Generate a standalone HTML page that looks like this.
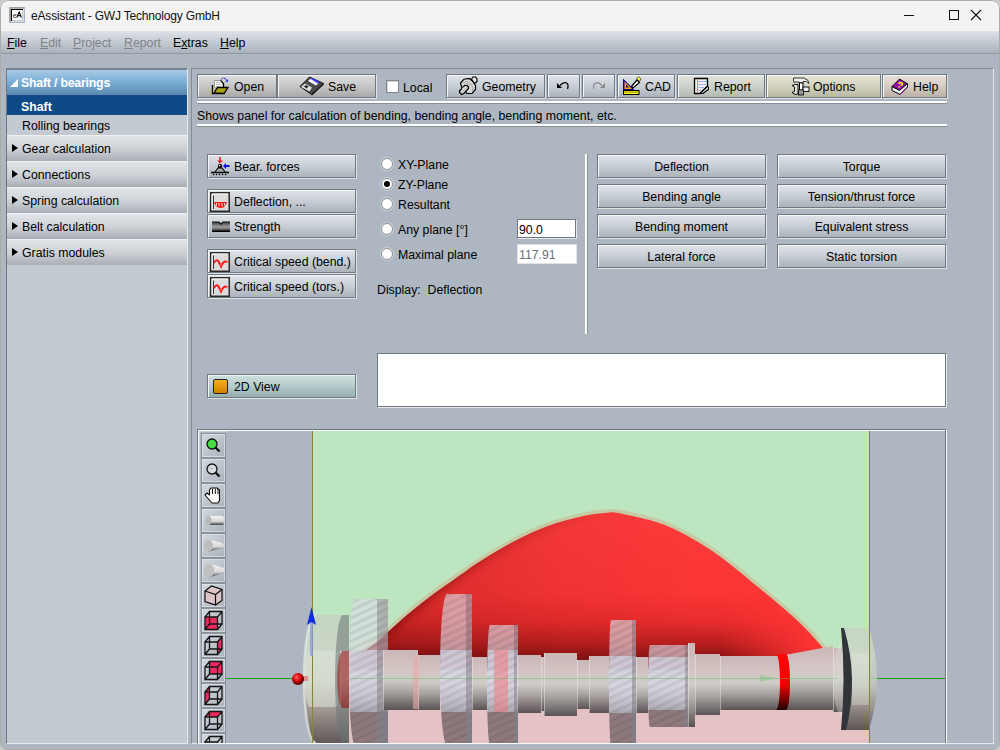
<!DOCTYPE html>
<html><head><meta charset="utf-8">
<style>
*{margin:0;padding:0;box-sizing:border-box}
html,body{width:1000px;height:750px;overflow:hidden;background:#c9c9c9}
body{font-family:"Liberation Sans",sans-serif;font-size:12.3px;color:#000;position:relative}
.a{position:absolute}
#win{position:absolute;left:0;top:0;width:1000px;height:750px;background:#aeb7c1;border-radius:8px;overflow:hidden}
#frame{position:absolute;left:0;top:0;width:1000px;height:750px;border-radius:8px;border:1px solid #ababab;z-index:50}
#title{position:absolute;left:0;top:0;width:1000px;height:31px;background:#f3f3f3}
#menu{position:absolute;left:0;top:31px;width:1000px;height:23px;background:linear-gradient(#dde2e7,#c4cad1 50%,#aab2bb);border-bottom:1px solid #8f979f}
.mi{position:absolute;top:36px;font-size:12.3px;line-height:14px}
.mi u{text-decoration:underline;text-underline-offset:0.8px;text-decoration-thickness:1px}
.dis{color:#7d8388}
.btn{position:absolute;border:1px solid #707880;box-shadow:inset 1px 1px 0 #f4f6f8,1px 1px 0 #dfe3e7;background:linear-gradient(#e0e4e9,#c8ced5 50%,#abb2ba);font-size:12.3px;line-height:22px;white-space:nowrap}
.grey{background:linear-gradient(#dedede,#c6c6c6 50%,#a9a9a9)}
.green{background:linear-gradient(#e0e4dd,#ccd2ca 50%,#b3bab2)}
.khaki{background:linear-gradient(#e6e5d7,#d3d2bf 50%,#b9b8a2)}
.pink{background:linear-gradient(#e9e2db,#d6ccc2 50%,#bcb1a6)}
.teal{background:linear-gradient(#cfe0e0,#b5cbcb 50%,#95adad)}
.sep{position:absolute;height:3px;background:linear-gradient(#fdfdfd 0,#fdfdfd 66%,#878e96 66%)}
.cat{position:absolute;left:7px;width:180px;height:26px;background:linear-gradient(#e1e4e8,#cfd3d8 50%,#a9aeb5);border-top:1px solid #eef0f2;font-size:12.3px;line-height:24px;padding-top:1px}
.tri{position:absolute;left:5px;top:8px;width:0;height:0;border-left:6px solid #000;border-top:4.5px solid transparent;border-bottom:4.5px solid transparent}
.rad{position:absolute;width:12px;height:12px;border-radius:50%;background:#fff;border:1px solid #8a9096;box-shadow:0 0 0 1px #c9cfd5}
.lbl{position:absolute;font-size:12.3px;line-height:14px;white-space:nowrap;margin-top:1px}
.tb{position:absolute;left:201px;width:25px;height:24px;border:1px solid #8d949c;box-shadow:inset 1px 1px 0 #e8ecf0, 1px 1px 0 #d4d9de;background:linear-gradient(135deg,#c9cfd6,#aab2bb)}
</style></head><body>
<div id="win">
 <div id="title">
  <svg class="a" style="left:9px;top:7px" width="17" height="17" viewBox="0 0 17 17"><rect x="0.5" y="0.5" width="15" height="15" fill="#ddd" stroke="#aab6c3"/><path d="M1 15V1H15" fill="none" stroke="#8a8a8a"/><path d="M2.5 14V2.5H14" fill="none" stroke="#000" stroke-width="1.2"/><rect x="3" y="3" width="10.5" height="10.5" fill="#fff"/><path d="M13.5 3V13.5H3" fill="none" stroke="#c8c8c8"/><text x="3.7" y="10.6" font-family="Liberation Sans" font-size="7" fill="#222">e</text><path d="M7.8 10.5L10.2 5L12.4 10.5M8.7 8.8H11.5" fill="none" stroke="#000" stroke-width="1.1"/></svg>
  <div class="a" style="left:31px;top:8px;font-size:12px;letter-spacing:-0.18px;line-height:16px;color:#111">eAssistant - GWJ Technology GmbH</div>
  <div class="a" style="left:904px;top:15px;width:10px;height:1px;background:#111"></div>
  <div class="a" style="left:949px;top:10px;width:10px;height:10px;border:1px solid #111"></div>
  <svg class="a" style="left:970px;top:9px" width="12" height="12"><path d="M1 1L11 11M11 1L1 11" stroke="#111" stroke-width="1.1"/></svg>
 </div>
 <div id="menu"></div>
 <div class="mi" style="left:7px"><u>F</u>ile</div>
 <div class="mi dis" style="left:40px"><u>E</u>dit</div>
 <div class="mi dis" style="left:73px"><u>P</u>roject</div>
 <div class="mi dis" style="left:124px"><u>R</u>eport</div>
 <div class="mi" style="left:173px">E<u>x</u>tras</div>
 <div class="mi" style="left:220px"><u>H</u>elp</div>

 <!-- left panel -->
 <div class="a" style="left:6px;top:68px;width:182px;height:676px;background:#c4cad1;border-left:1px solid #6e767e;border-top:1px solid #7a8288;border-right:1px solid #e6e9ec;border-bottom:1px solid #e6e9ec"></div>
 <div class="a" style="left:7px;top:69px;width:180px;height:26px;border-top:1px solid #6b8794;background:linear-gradient(#a8cbe5,#7aadd5 50%,#5b89ae)"></div>
 <svg class="a" style="left:10px;top:79px" width="8" height="8"><path d="M8 0V8H0Z" fill="#fff"/></svg>
 <div class="lbl" style="left:21px;top:75px;color:#fff;font-weight:bold;letter-spacing:-0.2px">Shaft / bearings</div>
 <div class="a" style="left:7px;top:95px;width:180px;height:20px;background:#0f4a87"></div>
 <div class="lbl" style="left:21px;top:99px;color:#fff;font-weight:bold">Shaft</div>
 <div class="lbl" style="left:22px;top:118px">Rolling bearings</div>
 <div class="cat" style="top:135px"><div class="tri"></div><span style="position:absolute;left:15px">Gear calculation</span></div>
 <div class="cat" style="top:161px"><div class="tri"></div><span style="position:absolute;left:15px">Connections</span></div>
 <div class="cat" style="top:187px"><div class="tri"></div><span style="position:absolute;left:15px">Spring calculation</span></div>
 <div class="cat" style="top:213px"><div class="tri"></div><span style="position:absolute;left:15px">Belt calculation</span></div>
 <div class="cat" style="top:239px"><div class="tri"></div><span style="position:absolute;left:15px">Gratis modules</span></div>

 <!-- main panel border -->
 <div class="a" style="left:191px;top:68px;width:803px;height:676px;border-left:1px solid #838b93;border-top:1px solid #838b93;border-right:1px solid #e4e8ec;border-bottom:1px solid #e4e8ec"></div>

 <!-- MAIN -->

 <!-- toolbar -->
 <div class="btn grey" style="left:197px;top:74px;width:80px;height:24px"><span class="a" style="left:36px;top:1px">Open</span>
  <svg class="a" style="left:10px;top:-1px" width="24" height="24" viewBox="0 0 24 24"><path d="M6.5 6.5h6l2.5 2.5v5H6.5z" fill="#fff" stroke="#999" stroke-width="1"/><path d="M12.5 6.5l3 3v4" fill="none" stroke="#000" stroke-width="1.3"/><path d="M8 8.5h4M8 10.5h5M8 12.5h5" stroke="#aaa" stroke-width="0.8"/><path d="M4.5 11v8.5h12" fill="none" stroke="#000" stroke-width="1.4"/><path d="M5.5 11.5v7" stroke="#c8c030" stroke-width="1"/><path d="M6 19l3.5-5.5h10.5l-3.8 5.8z" fill="#a8a418" stroke="#000" stroke-width="1.3"/><path d="M13 5.5c1.5-2 4-2 5 0.5" fill="none" stroke="#2030d0" stroke-width="1.1" stroke-dasharray="1.2 0.6"/><path d="M17 7.5l3-2.5v3z" fill="#2030e0"/></svg>
 </div>
 <div class="btn grey" style="left:277px;top:74px;width:99px;height:24px"><span class="a" style="left:50px;top:1px">Save</span>
  <svg class="a" style="left:18px;top:-1px" width="32" height="24" viewBox="0 0 32 24"><path d="M4 12.5L13.5 3L27.5 9.5L15.5 20.5Z" fill="#4a4a4a" stroke="#111" stroke-width="1"/><path d="M27.5 9.5L15.5 20.5L16 21.5L28 10.5Z" fill="#111"/><path d="M12 7L15 4.5L23 8.5L20 11.5Z" fill="#fff"/><path d="M14.5 5L16 4L23.5 8L22 9.5Z" fill="#3a40f0"/><path d="M5 13L9 9.5L16 13.5L13.5 17.5Z" fill="#ddd"/><path d="M8 12.5L10 11L12.5 12.5L10.5 14.5Z" fill="#222"/></svg>
 </div>
 <div class="a" style="left:386px;top:80px;width:13px;height:13px;background:#fff;border:1px solid #7c848c;box-shadow:inset 1px 1px 0 #d0d4d8"></div>
 <div class="lbl" style="left:403px;top:80px">Local</div>
 <div class="btn" style="left:446px;top:74px;width:99px;height:24px"><span class="a" style="left:35px;top:1px">Geometry</span>
  
 </div>
 <div class="btn" style="left:547px;top:74px;width:33px;height:24px">
  
 </div>
 <div class="btn" style="left:582px;top:74px;width:33px;height:24px">
  
 </div>
 <div class="btn" style="left:617px;top:74px;width:58px;height:24px"><span class="a" style="left:27px;top:1px">CAD</span>
  
 </div>
 <div class="btn green" style="left:677px;top:74px;width:88px;height:24px"><span class="a" style="left:36px;top:1px">Report</span>
  
 </div>
 <div class="btn khaki" style="left:766px;top:74px;width:115px;height:24px"><span class="a" style="left:46px;top:1px">Options</span>
  
 </div>
 <div class="btn pink" style="left:882px;top:74px;width:65px;height:24px"><span class="a" style="left:30px;top:1px">Help</span>
  
 </div>

 <svg class="a" style="left:456px;top:74px" width="24" height="24" viewBox="0 0 24 24">
  <path d="M4.5 9L8 5.2L13 4.5L16.5 7L19.5 11.5V15.5L16 19.5H11L6 14Z" fill="#d8d8d8" stroke="#000" stroke-width="1.2"/>
  <path d="M7 8.5Q11 6 14.5 9.5M8 10.5Q11.5 8.5 14 11.5M15 10Q17.5 13 16.5 17" fill="none" stroke="#999" stroke-width="0.8"/>
  <path d="M15.5 5L17 3H19.5L21 5V7.5L18.5 9.5Z" fill="#e8e8e8" stroke="#000" stroke-width="1.2"/>
  <path d="M3.5 17L8.5 11.5H11L12.5 13V14.5L8 19.5L5.5 20.5L3.5 18.5Z" fill="#c8c8c8" stroke="#000" stroke-width="1.2"/>
  <path d="M6 14.5L10 13" stroke="#f4f4f4" stroke-width="1"/>
 </svg>
 <svg class="a" style="left:547px;top:74px" width="33" height="24" viewBox="0 0 33 24">
  <path d="M10 9V14H15Z" fill="#000"/>
  <path d="M13 11.5Q16.5 7.5 19.5 9Q22 10.5 20.5 15" fill="none" stroke="#000" stroke-width="1.3"/>
 </svg>
 <svg class="a" style="left:582px;top:74px" width="33" height="24" viewBox="0 0 33 24">
  <path d="M23 9V14H18Z" fill="#8a8a8a"/>
  <path d="M20 11.5Q16.5 7.5 13.5 9Q11 10.5 12 15" fill="none" stroke="#8a8a8a" stroke-width="1.2"/>
 </svg>
 <svg class="a" style="left:620px;top:74px" width="24" height="24" viewBox="0 0 24 24">
  <path d="M3 4.5V16.5H15Z" fill="#0a0a8a"/>
  <path d="M4.5 7.5V15H12Z" fill="#ffa010"/>
  <path d="M6 10.5V13.5H9Z" fill="#0a0a8a"/>
  <rect x="3.5" y="16.5" width="15.5" height="4" fill="#ffff20" stroke="#000" stroke-width="1"/>
  <path d="M5 17.5v1.2M7 17.5v1.2M9 17.5v1.2M11 17.5v1.2M13 17.5v1.2M15 17.5v1.2M17 17.5v1.2" stroke="#000" stroke-width="0.8"/>
  <path d="M11.5 12.5L17 6L19.5 8.5L13 14Z" fill="#fff" stroke="#000" stroke-width="1.2"/>
  <path d="M16.5 4.5L18.5 2.8L21 5L19.5 7.5Z" fill="#ffff30" stroke="#000" stroke-width="0.6"/>
 </svg>
 <svg class="a" style="left:690px;top:74px" width="24" height="24" viewBox="0 0 24 24">
  <path d="M4.5 4.5H17.5V12L10 19.5H4.5Z" fill="#f4eeee" stroke="#000" stroke-width="1.3"/>
  <path d="M8 7.5H17M8 10.5H17M8 13.5H14M8 16.5H11" stroke="#88c4ee" stroke-width="1"/>
  <path d="M7.5 5V19" stroke="#f08080" stroke-width="1"/>
  <path d="M10 19.5L17.5 12L18.5 13.5V15.5L13 19.5Z" fill="#c8c8c8" stroke="#000" stroke-width="1.1"/>
 </svg>
 <svg class="a" style="left:788px;top:74px" width="24" height="24" viewBox="0 0 24 24">
  <path d="M5.5 4H16L20 6.5L21 9.5L18.5 7.5H15V9H11V8H7L6 8.5L5.5 7Z" fill="#eee" stroke="#222" stroke-width="0.9"/>
  <rect x="11.5" y="9" width="3.5" height="7" fill="#fff" stroke="#000" stroke-width="1"/>
  <path d="M4 11.5L7 10.5H10V20L7 20.5L4 18.5L6.5 17.5V13Z" fill="#ddd" stroke="#000" stroke-width="0.9"/>
  <rect x="15" y="13" width="6" height="4.5" fill="#e8e8e8" stroke="#000" stroke-width="0.9"/>
  <rect x="10.5" y="16" width="5" height="5" fill="#666" stroke="#000" stroke-width="0.8"/>
  <path d="M11 17h4M11 19h4M12 16.5v4M14 16.5v4" stroke="#ccc" stroke-width="0.6"/>
 </svg>
 <svg class="a" style="left:888px;top:74px" width="24" height="24" viewBox="0 0 24 24">
  <path d="M4 12.5L11.5 5L19 9.5L11.5 16.5Z" fill="#9010b0" stroke="#000" stroke-width="0.9"/>
  <path d="M4 12.5V16.5L12 20.5L19.5 13V9.5L11.5 16.5Z" fill="#eee" stroke="#000" stroke-width="1"/>
  <path d="M12 20.5L19.5 13" stroke="#9010b0" stroke-width="1"/>
  <path d="M10.5 9.5Q12 8 14 9Q15.5 10.5 12.5 11.5" fill="none" stroke="#ffee00" stroke-width="1.6"/>
  <rect x="10.3" y="12.2" width="1.6" height="1.4" fill="#ffee00"/>
 </svg>
 <div class="sep" style="left:197px;top:101px;width:750px"></div>
 <div class="lbl" style="left:197px;top:108px">Shows panel for calculation of bending, bending angle, bending moment, etc.</div>
 <div class="sep" style="left:197px;top:124px;width:750px"></div>

 <!-- left buttons -->
 <div class="btn" style="left:207px;top:154px;width:149px;height:24px"><span class="a" style="left:26px;top:1px">Bear. forces</span>
  <svg class="a" style="left:-1px;top:-1px" width="24" height="24" viewBox="0 0 24 24"><path d="M13 3v4" stroke="#e02020" stroke-width="1.6"/><path d="M10 6.5h6l-3 3z" fill="#e02020"/><path d="M18 12h4.5" stroke="#1010d0" stroke-width="1.8"/><path d="M19 9l-3 3 3 3z" fill="#1010d0"/><path d="M7.5 18.5L11 14H15L18.5 18.5Z" fill="#aaa" stroke="#000" stroke-width="1.1"/><circle cx="13" cy="12" r="2.2" fill="#000"/><circle cx="12.6" cy="11.6" r="0.8" fill="#fff"/><path d="M4 18.5H22" stroke="#000" stroke-width="1.3"/><path d="M6.5 20.5h0.1M9.5 20.5h0.1M12.5 20.5h0.1M15.5 20.5h0.1M18.5 20.5h0.1" stroke="#000" stroke-width="1.4" stroke-linecap="round"/></svg>
 </div>
 <div class="btn" style="left:207px;top:189px;width:149px;height:24px"><span class="a" style="left:26px;top:1px">Deflection, ...</span>
  <svg class="a" style="left:1px;top:1px" width="22" height="22" viewBox="0 0 22 22"><rect x="1.75" y="1.75" width="18.5" height="18.5" fill="#dcdcdc" stroke="#2a2a2a" stroke-width="1.5"/><path d="M3 19V3H19" fill="none" stroke="#f8f8f8" stroke-width="1"/><path d="M4.5 4.5V18" stroke="#333" stroke-width="1"/><path d="M5 11H18L17 13.5Q15 17 11.5 17Q8 17 6 13.5Z" fill="#ff1010"/><path d="M7.5 12v2.5M10 12v3.5M13 12v3.5M15.5 12v2.5" stroke="#fff" stroke-width="0.9"/></svg>
 </div>
 <div class="btn" style="left:207px;top:214px;width:149px;height:24px"><span class="a" style="left:26px;top:1px">Strength</span>
  <svg class="a" style="left:3px;top:6px" width="20" height="12" viewBox="0 0 20 12"><defs><linearGradient id="stg" x1="0" y1="0" x2="0" y2="1"><stop offset="0" stop-color="#3a3a3a"/><stop offset="0.55" stop-color="#a0a0a0"/><stop offset="1" stop-color="#3a3a3a"/></linearGradient></defs><path d="M1 1H8L10 3.2L12 1H19V10H1Z" fill="url(#stg)"/><path d="M1 1H8L10 3.2L12 1H19" fill="none" stroke="#111" stroke-width="1.2"/><path d="M1 10.3H19" stroke="#000" stroke-width="1.4"/></svg>
 </div>
 <div class="btn" style="left:207px;top:249px;width:149px;height:24px"><span class="a" style="left:26px;top:1px">Critical speed (bend.)</span>
  <svg class="a" style="left:1px;top:1px" width="22" height="22" viewBox="0 0 22 22"><rect x="1.75" y="1.75" width="18.5" height="18.5" fill="#dcdcdc" stroke="#2a2a2a" stroke-width="1.5"/><path d="M3 19V3H19" fill="none" stroke="#f8f8f8" stroke-width="1"/><path d="M4.5 4.5V18" stroke="#333" stroke-width="1"/><path d="M5 12Q7.5 7.5 9.5 10.5Q11 13 12 15.5Q13.5 12 15 11Q17 10 18.5 11.5" fill="none" stroke="#ff1010" stroke-width="2"/><circle cx="7" cy="11" r="0.6" fill="#fff"/><circle cx="18" cy="11" r="0.6" fill="#fff"/><path d="M12 13v1.5" stroke="#fff" stroke-width="0.7"/></svg>
 </div>
 <div class="btn" style="left:207px;top:274px;width:149px;height:24px"><span class="a" style="left:26px;top:1px">Critical speed (tors.)</span>
  <svg class="a" style="left:1px;top:1px" width="22" height="22" viewBox="0 0 22 22"><rect x="1.75" y="1.75" width="18.5" height="18.5" fill="#dcdcdc" stroke="#2a2a2a" stroke-width="1.5"/><path d="M3 19V3H19" fill="none" stroke="#f8f8f8" stroke-width="1"/><path d="M4.5 4.5V18" stroke="#333" stroke-width="1"/><path d="M5 12Q7.5 7.5 9.5 10.5Q11 13 12 15.5Q13.5 12 15 11Q17 10 18.5 11.5" fill="none" stroke="#ff1010" stroke-width="2"/><circle cx="7" cy="11" r="0.6" fill="#fff"/><circle cx="18" cy="11" r="0.6" fill="#fff"/><path d="M12 13v1.5" stroke="#fff" stroke-width="0.7"/></svg>
 </div>
 <div class="btn teal" style="left:207px;top:374px;width:149px;height:24px"><span class="a" style="left:26px;top:1px">2D View</span>
  <div class="a" style="left:5px;top:4px;width:15px;height:15px;border:1px solid #222;border-radius:2px;background:linear-gradient(#f5b020,#d08000)"></div>
 </div>

 <!-- radios -->
 <div class="rad" style="left:381px;top:158px"></div><div class="lbl" style="left:398px;top:157px">XY-Plane</div>
 <div class="rad" style="left:381px;top:178px"><div class="a" style="left:2px;top:2px;width:6px;height:6px;border-radius:50%;background:#000"></div></div><div class="lbl" style="left:398px;top:177px">ZY-Plane</div>
 <div class="rad" style="left:381px;top:198px"></div><div class="lbl" style="left:398px;top:197px">Resultant</div>
 <div class="rad" style="left:381px;top:223px"></div><div class="lbl" style="left:398px;top:222px">Any plane [°]</div>
 <div class="rad" style="left:381px;top:248px"></div><div class="lbl" style="left:398px;top:247px">Maximal plane</div>
 <div class="a" style="left:517px;top:219px;width:59px;height:19px;background:#fff;border:1px solid #6f777f;box-shadow:1px 1px 0 #e4e8ec"><span class="a" style="left:1px;top:3px;line-height:14px">90.0</span></div>
 <div class="a" style="left:517px;top:244px;width:60px;height:20px;background:#fff;border:1px solid #dfe3e7"><span class="a" style="left:1px;top:3px;line-height:14px;color:#6c7074">117.91</span></div>
 <div class="lbl" style="left:377px;top:282px;">Display:&nbsp; Deflection</div>
 <div class="a" style="left:585px;top:154px;width:3px;height:180px;background:linear-gradient(90deg,#fdfdfd 66%,#8a9199 66%)"></div>

 <!-- right buttons -->
 <div class="btn" style="left:597px;top:154px;width:169px;height:24px;text-align:center;padding-top:1px">Deflection</div>
 <div class="btn" style="left:777px;top:154px;width:169px;height:24px;text-align:center;padding-top:1px">Torque</div>
 <div class="btn" style="left:597px;top:184px;width:169px;height:24px;text-align:center;padding-top:1px">Bending angle</div>
 <div class="btn" style="left:777px;top:184px;width:169px;height:24px;text-align:center;padding-top:1px">Tension/thrust force</div>
 <div class="btn" style="left:597px;top:214px;width:169px;height:24px;text-align:center;padding-top:1px">Bending moment</div>
 <div class="btn" style="left:777px;top:214px;width:169px;height:24px;text-align:center;padding-top:1px">Equivalent stress</div>
 <div class="btn" style="left:597px;top:244px;width:169px;height:24px;text-align:center;padding-top:1px">Lateral force</div>
 <div class="btn" style="left:777px;top:244px;width:169px;height:24px;text-align:center;padding-top:1px">Static torsion</div>

 <!-- text area -->
 <div class="a" style="left:377px;top:353px;width:569px;height:54px;background:#fff;border:1px solid #6f777f;box-shadow:1px 1px 0 #e4e8ec"></div>

 <!-- 3D view -->
 <!--SCENE-->
<div id="view" class="a" style="left:197px;top:429px;width:750px;height:315px;border-left:1px solid #6f777f;border-top:1px solid #6f777f;border-right:1px solid #fbfcfd;border-bottom:1px solid #fbfcfd;overflow:hidden">
  <svg class="a" style="left:0;top:0" width="748" height="313" viewBox="198 430 748 313">
   <defs>
    <linearGradient id="redG" x1="0" y1="511" x2="0" y2="662" gradientUnits="userSpaceOnUse">
     <stop offset="0" stop-color="#ff3b3b"/><stop offset="0.55" stop-color="#fa3535"/><stop offset="0.73" stop-color="#e82c2c"/><stop offset="0.88" stop-color="#b81e1e"/><stop offset="1" stop-color="#781010"/>
    </linearGradient>
    <linearGradient id="redL" x1="350" y1="0" x2="700" y2="0" gradientUnits="userSpaceOnUse">
     <stop offset="0" stop-color="#400000" stop-opacity="0.22"/><stop offset="0.6" stop-color="#400000" stop-opacity="0.06"/><stop offset="1" stop-color="#400000" stop-opacity="0"/>
    </linearGradient>
    <linearGradient id="redR" x1="720" y1="0" x2="810" y2="0" gradientUnits="userSpaceOnUse"><stop offset="0" stop-color="#ff3434" stop-opacity="0"/><stop offset="1" stop-color="#ff3434" stop-opacity="0.95"/></linearGradient>
    <linearGradient id="shaftG" x1="0" y1="0" x2="0" y2="1">
     <stop offset="0" stop-color="#cab6b6"/><stop offset="0.3" stop-color="#d3c5c3"/><stop offset="0.5" stop-color="#cdccc7"/><stop offset="0.7" stop-color="#a8a2a0"/><stop offset="1" stop-color="#5a5254"/>
    </linearGradient>
    <linearGradient id="shade" x1="0" y1="0" x2="0" y2="1">
     <stop offset="0" stop-color="#fff" stop-opacity="0"/><stop offset="0.5" stop-color="#fff" stop-opacity="0.2"/><stop offset="1" stop-color="#222" stop-opacity="0.5"/>
    </linearGradient>
    <pattern id="stripe" width="7" height="7" patternUnits="userSpaceOnUse" patternTransform="rotate(-25)">
     <rect width="7" height="3" fill="#333"/>
    </pattern>
    <linearGradient id="brgG" x1="0" y1="0" x2="0" y2="1">
     <stop offset="0" stop-color="#c6d6c4"/><stop offset="0.3" stop-color="#ccd8c8"/><stop offset="0.55" stop-color="#c4c8c0"/><stop offset="0.72" stop-color="#a09a94"/><stop offset="1" stop-color="#5e5456"/>
    </linearGradient>
    <radialGradient id="ball" cx="0.4" cy="0.35" r="0.6"><stop offset="0" stop-color="#ff6060"/><stop offset="0.6" stop-color="#d00000"/><stop offset="1" stop-color="#500000"/></radialGradient>
    <linearGradient id="ringG" x1="0" y1="0" x2="0" y2="1"><stop offset="0" stop-color="#ff0808"/><stop offset="0.55" stop-color="#f00000"/><stop offset="1" stop-color="#200000"/></linearGradient>
    <linearGradient id="tbg" x1="0" y1="0" x2="1" y2="1"><stop offset="0" stop-color="#d3d9df"/><stop offset="1" stop-color="#a9b1ba"/></linearGradient>
    <linearGradient id="cylg" x1="0" y1="0" x2="0" y2="1"><stop offset="0" stop-color="#f4f4f4"/><stop offset="0.6" stop-color="#d8d8d8"/><stop offset="1" stop-color="#404040"/></linearGradient>
   </defs>
   <rect x="198" y="430" width="748" height="313" fill="#aeb7c1"/>
   <rect x="312" y="431" width="557" height="248" fill="#bde5bf"/>
   <rect x="312" y="679" width="557" height="64" fill="#e5c3c5"/>
   <path d="M350.0 660.0 C354.3 656.7 369.5 645.2 376.0 640.0 C382.5 634.8 383.8 633.1 389.0 628.5 C394.2 623.9 399.7 618.6 407.0 612.5 C414.3 606.4 424.2 598.6 433.0 592.0 C441.8 585.4 452.8 578.1 460.0 573.0 C467.2 567.9 467.3 567.1 476.0 561.6 C484.7 556.1 500.0 546.6 512.0 540.3 C524.0 534.0 536.0 528.4 548.0 524.0 C560.0 519.6 574.5 516.2 584.0 514.0 C593.5 511.8 599.0 511.4 605.0 511.0 C611.0 510.6 610.0 509.5 620.0 511.5 C630.0 513.5 649.8 516.9 665.0 523.0 C680.2 529.1 695.8 538.0 711.0 548.0 C726.2 558.0 741.0 570.8 756.0 583.0 C771.0 595.2 789.7 610.9 801.0 621.5 C812.3 632.1 818.5 640.4 824.0 646.5 C829.5 652.6 831.7 655.1 834.0 658.0 C836.3 660.9 837.3 663.0 838.0 664.0 L838 670 L350 670 Z" fill="url(#redG)"/>
   <path d="M350.0 660.0 C354.3 656.7 369.5 645.2 376.0 640.0 C382.5 634.8 383.8 633.1 389.0 628.5 C394.2 623.9 399.7 618.6 407.0 612.5 C414.3 606.4 424.2 598.6 433.0 592.0 C441.8 585.4 452.8 578.1 460.0 573.0 C467.2 567.9 467.3 567.1 476.0 561.6 C484.7 556.1 500.0 546.6 512.0 540.3 C524.0 534.0 536.0 528.4 548.0 524.0 C560.0 519.6 574.5 516.2 584.0 514.0 C593.5 511.8 599.0 511.4 605.0 511.0 C611.0 510.6 610.0 509.5 620.0 511.5 C630.0 513.5 649.8 516.9 665.0 523.0 C680.2 529.1 695.8 538.0 711.0 548.0 C726.2 558.0 741.0 570.8 756.0 583.0 C771.0 595.2 789.7 610.9 801.0 621.5 C812.3 632.1 818.5 640.4 824.0 646.5 C829.5 652.6 831.7 655.1 834.0 658.0 C836.3 660.9 837.3 663.0 838.0 664.0 L838 670 L350 670 Z" fill="url(#redL)"/>
   <path d="M350.0 660.0 C354.3 656.7 369.5 645.2 376.0 640.0 C382.5 634.8 383.8 633.1 389.0 628.5 C394.2 623.9 399.7 618.6 407.0 612.5 C414.3 606.4 424.2 598.6 433.0 592.0 C441.8 585.4 452.8 578.1 460.0 573.0 C467.2 567.9 467.3 567.1 476.0 561.6 C484.7 556.1 500.0 546.6 512.0 540.3 C524.0 534.0 536.0 528.4 548.0 524.0 C560.0 519.6 574.5 516.2 584.0 514.0 C593.5 511.8 599.0 511.4 605.0 511.0 C611.0 510.6 610.0 509.5 620.0 511.5 C630.0 513.5 649.8 516.9 665.0 523.0 C680.2 529.1 695.8 538.0 711.0 548.0 C726.2 558.0 741.0 570.8 756.0 583.0 C771.0 595.2 789.7 610.9 801.0 621.5 C812.3 632.1 818.5 640.4 824.0 646.5 C829.5 652.6 831.7 655.1 834.0 658.0 C836.3 660.9 837.3 663.0 838.0 664.0 L838 670 L350 670 Z" fill="url(#redR)"/>
   <clipPath id="redclip"><path d="M350.0 660.0 C354.3 656.7 369.5 645.2 376.0 640.0 C382.5 634.8 383.8 633.1 389.0 628.5 C394.2 623.9 399.7 618.6 407.0 612.5 C414.3 606.4 424.2 598.6 433.0 592.0 C441.8 585.4 452.8 578.1 460.0 573.0 C467.2 567.9 467.3 567.1 476.0 561.6 C484.7 556.1 500.0 546.6 512.0 540.3 C524.0 534.0 536.0 528.4 548.0 524.0 C560.0 519.6 574.5 516.2 584.0 514.0 C593.5 511.8 599.0 511.4 605.0 511.0 C611.0 510.6 610.0 509.5 620.0 511.5 C630.0 513.5 649.8 516.9 665.0 523.0 C680.2 529.1 695.8 538.0 711.0 548.0 C726.2 558.0 741.0 570.8 756.0 583.0 C771.0 595.2 789.7 610.9 801.0 621.5 C812.3 632.1 818.5 640.4 824.0 646.5 C829.5 652.6 831.7 655.1 834.0 658.0 C836.3 660.9 837.3 663.0 838.0 664.0 L838 670 L350 670 Z"/></clipPath>
   <filter id="blur4" x="-20%" y="-20%" width="140%" height="140%"><feGaussianBlur stdDeviation="4"/></filter>
   <linearGradient id="edgeFade" x1="380" y1="0" x2="620" y2="0" gradientUnits="userSpaceOnUse"><stop offset="0" stop-color="#600808" stop-opacity="0.55"/><stop offset="1" stop-color="#600808" stop-opacity="0"/></linearGradient>
   <g clip-path="url(#redclip)"><path d="M350.0 660.0 C354.3 656.7 369.5 645.2 376.0 640.0 C382.5 634.8 383.8 633.1 389.0 628.5 C394.2 623.9 399.7 618.6 407.0 612.5 C414.3 606.4 424.2 598.6 433.0 592.0 C441.8 585.4 452.8 578.1 460.0 573.0 C467.2 567.9 467.3 567.1 476.0 561.6 C484.7 556.1 500.0 546.6 512.0 540.3 C524.0 534.0 536.0 528.4 548.0 524.0 C560.0 519.6 574.5 516.2 584.0 514.0 C593.5 511.8 599.0 511.4 605.0 511.0 C611.0 510.6 610.0 509.5 620.0 511.5 C630.0 513.5 649.8 516.9 665.0 523.0 C680.2 529.1 695.8 538.0 711.0 548.0 C726.2 558.0 741.0 570.8 756.0 583.0 C771.0 595.2 789.7 610.9 801.0 621.5 C812.3 632.1 818.5 640.4 824.0 646.5 C829.5 652.6 831.7 655.1 834.0 658.0 C836.3 660.9 837.3 663.0 838.0 664.0" fill="none" stroke="url(#edgeFade)" stroke-width="10" filter="url(#blur4)"/></g>
   <path d="M350.0 660.0 C354.3 656.7 369.5 645.2 376.0 640.0 C382.5 634.8 383.8 633.1 389.0 628.5 C394.2 623.9 399.7 618.6 407.0 612.5 C414.3 606.4 424.2 598.6 433.0 592.0 C441.8 585.4 452.8 578.1 460.0 573.0 C467.2 567.9 467.3 567.1 476.0 561.6 C484.7 556.1 500.0 546.6 512.0 540.3 C524.0 534.0 536.0 528.4 548.0 524.0 C560.0 519.6 574.5 516.2 584.0 514.0 C593.5 511.8 599.0 511.4 605.0 511.0 C611.0 510.6 610.0 509.5 620.0 511.5 C630.0 513.5 649.8 516.9 665.0 523.0 C680.2 529.1 695.8 538.0 711.0 548.0 C726.2 558.0 741.0 570.8 756.0 583.0 C771.0 595.2 789.7 610.9 801.0 621.5 C812.3 632.1 818.5 640.4 824.0 646.5 C829.5 652.6 831.7 655.1 834.0 658.0 C836.3 660.9 837.3 663.0 838.0 664.0" fill="none" stroke="#c6c9a3" stroke-width="3.4" transform="translate(0,0.2)"/>
   <line x1="226" y1="678.5" x2="945" y2="678.5" stroke="#18a018" stroke-width="1"/>
   <!-- left bearing -->
   <linearGradient id="brgL" x1="0" y1="615" x2="0" y2="743" gradientUnits="userSpaceOnUse"><stop offset="0" stop-color="#c4d4c2"/><stop offset="0.28" stop-color="#cad6c6"/><stop offset="0.5" stop-color="#c8cec4"/><stop offset="0.72" stop-color="#a49c96"/><stop offset="1" stop-color="#625858"/></linearGradient>
   <path d="M316 615 L349 615 L349 743 L316 743 A12 64 0 0 1 316 615Z" fill="url(#brgL)"/>
   <path d="M316 615 A12 64 0 0 0 316 743" fill="none" stroke="#e4ebe2" stroke-width="2.5" opacity="0.7"/>
   <path d="M310 651 L338 651 L338 707 L310 707 A5 28 0 0 1 310 651Z" fill="#e0e6dc" opacity="0.55"/>
   <path d="M343 615 A8 64 0 0 0 343 743 L349 743 L349 615Z" fill="#6a7474" opacity="0.55"/>
   <rect x="340" y="651" width="9" height="57" fill="url(#shaftG)"/><rect x="340" y="651" width="1" height="57" fill="#f4f0f0" opacity="0.45"/>
   <path d="M343 651 A6 28.5 0 0 0 343 708 L349 708 L349 651Z" fill="#a03a3a" opacity="0.7"/>
   <clipPath id="gc1"><path d="M355 599 A6 73.0 0 0 0 355 745 L388 745 L388 599 Z"/></clipPath><g clip-path="url(#gc1)"><rect x="348" y="599" width="45" height="51" fill="#dcdce6" opacity="0.64"/><rect x="348" y="650" width="45" height="62" fill="#d2d0dc" opacity="0.95"/><rect x="348" y="712" width="45" height="33" fill="#4a3e45" opacity="0.56"/><rect x="348" y="599" width="45" height="146" fill="url(#stripe)" opacity="0.1"/><rect x="348" y="650" width="45" height="62" fill="url(#shade)" opacity="0.45"/><rect x="377" y="599" width="11" height="113" fill="#4a3e48" opacity="0.28"/><rect x="377" y="712" width="11" height="33" fill="#7a8490" opacity="0.5"/></g>
   <rect x="383" y="650" width="35" height="60" fill="url(#shaftG)"/><rect x="383" y="650" width="1" height="60" fill="#f4f0f0" opacity="0.45"/>
   <rect x="418" y="655" width="22" height="55" fill="url(#shaftG)"/><rect x="418" y="655" width="1" height="55" fill="#f4f0f0" opacity="0.45"/>
   <rect x="413" y="657" width="6" height="52" fill="#e8a8a8" opacity="0.6"/>
   <clipPath id="gc2"><path d="M447 594 A7 75.5 0 0 0 447 745 L472 745 L472 594 Z"/></clipPath><g clip-path="url(#gc2)"><rect x="439" y="594" width="39" height="56" fill="#dcdce6" opacity="0.64"/><rect x="439" y="650" width="39" height="62" fill="#d2d0dc" opacity="0.95"/><rect x="439" y="712" width="39" height="33" fill="#4a3e45" opacity="0.56"/><rect x="439" y="594" width="39" height="151" fill="url(#stripe)" opacity="0.1"/><rect x="439" y="650" width="39" height="62" fill="url(#shade)" opacity="0.45"/><rect x="466" y="594" width="6" height="118" fill="#4a3e48" opacity="0.28"/><rect x="466" y="712" width="6" height="33" fill="#7a8490" opacity="0.5"/></g>
   <rect x="472" y="657" width="15" height="53" fill="url(#shaftG)"/><rect x="472" y="657" width="1" height="53" fill="#f4f0f0" opacity="0.45"/>
   <clipPath id="gc3"><path d="M490 625 A3 60.0 0 0 0 490 745 L518 745 L518 625 Z"/></clipPath><g clip-path="url(#gc3)"><rect x="486" y="625" width="34" height="25" fill="#dcdce6" opacity="0.64"/><rect x="486" y="650" width="34" height="62" fill="#d2d0dc" opacity="0.95"/><rect x="486" y="712" width="34" height="33" fill="#4a3e45" opacity="0.56"/><rect x="486" y="625" width="34" height="120" fill="url(#stripe)" opacity="0.1"/><rect x="486" y="650" width="34" height="62" fill="url(#shade)" opacity="0.45"/><rect x="494" y="650" width="14" height="62" fill="#f07a80" opacity="0.55"/><rect x="514" y="625" width="4" height="87" fill="#4a3e48" opacity="0.28"/><rect x="514" y="712" width="4" height="33" fill="#7a8490" opacity="0.5"/></g>
   <rect x="517" y="655" width="24" height="58" fill="url(#shaftG)"/><rect x="517" y="655" width="1" height="58" fill="#f4f0f0" opacity="0.45"/>
   <rect x="541" y="657" width="3" height="54" fill="url(#shaftG)"/><rect x="541" y="657" width="1" height="54" fill="#f4f0f0" opacity="0.45"/>
   <rect x="544" y="653" width="33" height="63" fill="url(#shaftG)"/><rect x="544" y="653" width="1" height="63" fill="#f4f0f0" opacity="0.45"/>
   <rect x="577" y="660" width="12" height="49" fill="url(#shaftG)"/><rect x="577" y="660" width="1" height="49" fill="#f4f0f0" opacity="0.45"/>
   <rect x="589" y="656" width="20" height="57" fill="url(#shaftG)"/><rect x="589" y="656" width="1" height="57" fill="#f4f0f0" opacity="0.45"/>
   <clipPath id="gc4"><path d="M611 620 A2 62.5 0 0 0 611 745 L636 745 L636 620 Z"/></clipPath><g clip-path="url(#gc4)"><rect x="608" y="620" width="29" height="36" fill="#dcdce6" opacity="0.64"/><rect x="608" y="656" width="29" height="57" fill="#d2d0dc" opacity="0.95"/><rect x="608" y="713" width="29" height="32" fill="#4a3e45" opacity="0.56"/><rect x="608" y="620" width="29" height="125" fill="url(#stripe)" opacity="0.1"/><rect x="608" y="656" width="29" height="57" fill="url(#shade)" opacity="0.45"/><rect x="632" y="620" width="4" height="93" fill="#4a3e48" opacity="0.28"/><rect x="632" y="713" width="4" height="32" fill="#7a8490" opacity="0.5"/></g>
   <rect x="636" y="657" width="12" height="56" fill="url(#shaftG)"/><rect x="636" y="657" width="1" height="56" fill="#f4f0f0" opacity="0.45"/>
   <clipPath id="gc5"><path d="M650 645 A2 41.0 0 0 0 650 727 L688 727 L688 645 Z"/></clipPath><g clip-path="url(#gc5)"><rect x="647" y="645" width="42" height="12" fill="#dcdce6" opacity="0.64"/><rect x="647" y="657" width="42" height="53" fill="#d2d0dc" opacity="0.95"/><rect x="647" y="710" width="42" height="17" fill="#4a3e45" opacity="0.56"/><rect x="647" y="645" width="42" height="82" fill="url(#stripe)" opacity="0.1"/><rect x="647" y="657" width="42" height="53" fill="url(#shade)" opacity="0.45"/><rect x="685" y="645" width="3" height="65" fill="#4a3e48" opacity="0.28"/><rect x="685" y="710" width="3" height="17" fill="#7a8490" opacity="0.5"/></g>
   <rect x="688" y="643" width="7" height="84" fill="url(#shaftG)"/><rect x="688" y="643" width="1" height="84" fill="#f4f0f0" opacity="0.45"/>
   <rect x="695" y="654" width="25" height="61" fill="url(#shaftG)"/><rect x="695" y="654" width="1" height="61" fill="#f4f0f0" opacity="0.45"/>
   <rect x="720" y="656" width="62" height="54" fill="url(#shaftG)"/><rect x="720" y="656" width="1" height="54" fill="#f4f0f0" opacity="0.45"/>
   <path d="M785 655 L833 646 L833 710 L785 710 Z" fill="url(#shaftG)"/>
   <path d="M776 654 H786 A4 28 0 0 1 786 710 H776 A4 28 0 0 0 776 654Z" fill="url(#ringG)"/>
   <rect x="833" y="648" width="12" height="64" fill="url(#shaftG)"/><rect x="833" y="648" width="1" height="64" fill="#f4f0f0" opacity="0.45"/>
   <line x1="350" y1="678.5" x2="838" y2="678.5" stroke="#60c060" stroke-width="1" opacity="0.45"/>
   <path d="M760 675 L776 678.5 L760 682Z" fill="#80c080" opacity="0.45"/>
   <!-- right bearing -->
   <path d="M833 679 Q833 640 852 628 L869 628 L869 730 L852 730 Q833 718 833 679Z" fill="#dfe6dc" opacity="0.35"/>
   <path d="M843 628 L869 628 L869 730 L845 730 Q858 679 843 628Z" fill="url(#brgG)"/>
   <path d="M841 628 Q846 679 841 730 L846 730 Q859 679 844 628 Z" fill="#31353a"/>
   <path d="M869 628 Q885 679 869 730Z" fill="url(#brgG)" opacity="0.8"/>
   <rect x="852" y="653" width="17" height="52" fill="#e2e8de" opacity="0.35"/>
   <line x1="869.5" y1="431" x2="869.5" y2="743" stroke="#848432" stroke-width="1"/>
   <line x1="312.5" y1="431" x2="312.5" y2="743" stroke="#848432" stroke-width="1"/>
   <!-- arrows & ball -->
   <rect x="310" y="620" width="3" height="36" fill="#8898e0" opacity="0.75"/>
   <path d="M311.5 607 L307 625 L311.5 622 L316 625Z" fill="#1030e0"/>
   <rect x="303" y="676" width="5" height="5" fill="#e08080" opacity="0.8"/>
   <circle cx="298" cy="679" r="6" fill="url(#ball)"/>
   <path d="M198.5 743V430.5H945" stroke="#fbfcfd" stroke-width="1" fill="none"/><path d="M199.5 743V431.5H228" stroke="#c6ced6" stroke-width="1" fill="none"/><line x1="945.5" y1="430" x2="945.5" y2="743" stroke="#6f777f" stroke-width="1"/>
<rect x="201.5" y="433.5" width="24" height="24" fill="url(#tbg)" stroke="#8a929a"/><rect x="202.5" y="434.5" width="22" height="22" fill="none" stroke="#e4e8ec" stroke-width="0.8" opacity="0.8"/><g transform="translate(213.5,445.5)"><circle cx="-1.5" cy="-1.5" r="5" fill="#44e040" stroke="#111" stroke-width="1.3"/><path d="M-4 -2.5q1.5 2 3.5 0" stroke="#88aa88" fill="none" stroke-width="0.7"/><path d="M2 2l4 4" stroke="#111" stroke-width="2.4"/></g>
<rect x="201.5" y="458.5" width="24" height="24" fill="url(#tbg)" stroke="#8a929a"/><rect x="202.5" y="459.5" width="22" height="22" fill="none" stroke="#e4e8ec" stroke-width="0.8" opacity="0.8"/><g transform="translate(213.5,470.5)"><circle cx="-1.5" cy="-1.5" r="5" fill="#d8dde2" stroke="#111" stroke-width="1.3"/><path d="M-4 -2.5q1.5 2 3.5 0" stroke="#999" fill="none" stroke-width="0.7"/><path d="M2 2l4 4" stroke="#111" stroke-width="2.4"/></g>
<rect x="201.5" y="483.5" width="24" height="24" fill="url(#tbg)" stroke="#8a929a"/><rect x="202.5" y="484.5" width="22" height="22" fill="none" stroke="#e4e8ec" stroke-width="0.8" opacity="0.8"/><g transform="translate(213.5,495.5)"><path d="M-8.5 -0.5L-6.5 -2.5L-4 -0.5V-5.5L-2.5 -7.5H3.5L6 -5.5V5L4.5 7.5H-1.5Z" fill="#fff" stroke="#111" stroke-width="1.1" stroke-linejoin="round"/><path d="M-1 -7V-1.5M1.8 -7V-1.5M4.5 -6.5V-1.5" stroke="#111" stroke-width="1"/></g>
<rect x="201.5" y="508.5" width="24" height="24" fill="url(#tbg)" stroke="#8a929a"/><rect x="202.5" y="509.5" width="22" height="22" fill="none" stroke="#e4e8ec" stroke-width="0.8" opacity="0.8"/><g transform="translate(213.5,520.5)"><path d="M-5 -4.5H9a1.5 4.5 0 0 1 0 9H-5z" fill="url(#cylg)"/><ellipse cx="-5" cy="0" rx="3" ry="4.5" fill="#b8b8b8"/></g>
<rect x="201.5" y="533.5" width="24" height="24" fill="url(#tbg)" stroke="#8a929a"/><rect x="202.5" y="534.5" width="22" height="22" fill="none" stroke="#e4e8ec" stroke-width="0.8" opacity="0.8"/><g transform="translate(213.5,545.5)"><path d="M-5 -6L9.5 -2.5Q11 0 9.5 2.5L-5 6z" fill="url(#cylg)"/><ellipse cx="-5" cy="0" rx="4.5" ry="6" fill="#bdbdbd"/></g>
<rect x="201.5" y="558.5" width="24" height="24" fill="url(#tbg)" stroke="#8a929a"/><rect x="202.5" y="559.5" width="22" height="22" fill="none" stroke="#e4e8ec" stroke-width="0.8" opacity="0.8"/><g transform="translate(213.5,570.5)"><path d="M-4.5 -7L10.5 -2.5Q11.5 0 10.5 2.5L-4.5 7z" fill="url(#cylg)"/><ellipse cx="-4.5" cy="0" rx="5" ry="7" fill="#c0c0c0"/></g>
<rect x="201.5" y="583.5" width="24" height="24" fill="url(#tbg)" stroke="#8a929a"/><rect x="202.5" y="584.5" width="22" height="22" fill="none" stroke="#e4e8ec" stroke-width="0.8" opacity="0.8"/><g transform="translate(213.5,595.5)"><path d="M-8.5 -4.5L-2 -9.5L8.5 -6V5L2 9.5L-8.5 6Z" fill="#dcc4c8" stroke="#111" stroke-width="1.2"/><path d="M-8.5 -4.5L2 -1L8.5 -6M2 -1V9.5" fill="none" stroke="#111" stroke-width="1.2"/></g>
<rect x="201.5" y="608.5" width="24" height="24" fill="url(#tbg)" stroke="#8a929a"/><rect x="202.5" y="609.5" width="22" height="22" fill="none" stroke="#e4e8ec" stroke-width="0.8" opacity="0.8"/><g transform="translate(213.5,620.5)"><path d="M-8.5 -3.5H4V9H-8.5Z" fill="#f02a60"/><path d="M-8.5 -3.5H4V9H-8.5Z M-4 -9H8.5V3.5H-4Z M-8.5 -3.5L-4 -9 M4 -3.5L8.5 -9 M4 9L8.5 3.5 M-8.5 9L-4 3.5" fill="none" stroke="#151515" stroke-width="1.3"/></g>
<rect x="201.5" y="633.5" width="24" height="24" fill="url(#tbg)" stroke="#8a929a"/><rect x="202.5" y="634.5" width="22" height="22" fill="none" stroke="#e4e8ec" stroke-width="0.8" opacity="0.8"/><g transform="translate(213.5,645.5)"><path d="M4 -3.5L8.5 -9V3.5L4 9Z" fill="#f02a60"/><path d="M-8.5 -3.5H4V9H-8.5Z M-4 -9H8.5V3.5H-4Z M-8.5 -3.5L-4 -9 M4 -3.5L8.5 -9 M4 9L8.5 3.5 M-8.5 9L-4 3.5" fill="none" stroke="#151515" stroke-width="1.3"/></g>
<rect x="201.5" y="658.5" width="24" height="24" fill="url(#tbg)" stroke="#8a929a"/><rect x="202.5" y="659.5" width="22" height="22" fill="none" stroke="#e4e8ec" stroke-width="0.8" opacity="0.8"/><g transform="translate(213.5,670.5)"><path d="M-4 -9H8.5V3.5H-4Z" fill="#f02a60"/><path d="M-8.5 -3.5H4V9H-8.5Z M-4 -9H8.5V3.5H-4Z M-8.5 -3.5L-4 -9 M4 -3.5L8.5 -9 M4 9L8.5 3.5 M-8.5 9L-4 3.5" fill="none" stroke="#151515" stroke-width="1.3"/></g>
<rect x="201.5" y="683.5" width="24" height="24" fill="url(#tbg)" stroke="#8a929a"/><rect x="202.5" y="684.5" width="22" height="22" fill="none" stroke="#e4e8ec" stroke-width="0.8" opacity="0.8"/><g transform="translate(213.5,695.5)"><path d="M-8.5 -3.5L-4 -9V3.5L-8.5 9Z" fill="#f02a60"/><path d="M-8.5 -3.5H4V9H-8.5Z M-4 -9H8.5V3.5H-4Z M-8.5 -3.5L-4 -9 M4 -3.5L8.5 -9 M4 9L8.5 3.5 M-8.5 9L-4 3.5" fill="none" stroke="#151515" stroke-width="1.3"/></g>
<rect x="201.5" y="708.5" width="24" height="24" fill="url(#tbg)" stroke="#8a929a"/><rect x="202.5" y="709.5" width="22" height="22" fill="none" stroke="#e4e8ec" stroke-width="0.8" opacity="0.8"/><g transform="translate(213.5,720.5)"><path d="M-8.5 -3.5L-4 -9H8.5L4 -3.5Z" fill="#f02a60"/><path d="M-8.5 -3.5H4V9H-8.5Z M-4 -9H8.5V3.5H-4Z M-8.5 -3.5L-4 -9 M4 -3.5L8.5 -9 M4 9L8.5 3.5 M-8.5 9L-4 3.5" fill="none" stroke="#151515" stroke-width="1.3"/></g>
<rect x="201.5" y="733.5" width="24" height="24" fill="url(#tbg)" stroke="#8a929a"/><rect x="202.5" y="734.5" width="22" height="22" fill="none" stroke="#e4e8ec" stroke-width="0.8" opacity="0.8"/><g transform="translate(213.5,745.5)"><path d="M-8.5 -3.5H4V9H-8.5Z M-4 -9H8.5V3.5H-4Z M-8.5 -3.5L-4 -9 M4 -3.5L8.5 -9 M4 9L8.5 3.5 M-8.5 9L-4 3.5" fill="none" stroke="#151515" stroke-width="1.3"/></g>
  </svg>
 </div>
 <!--/SCENE-->
 <div id="frame"></div>
</div>
</body></html>
